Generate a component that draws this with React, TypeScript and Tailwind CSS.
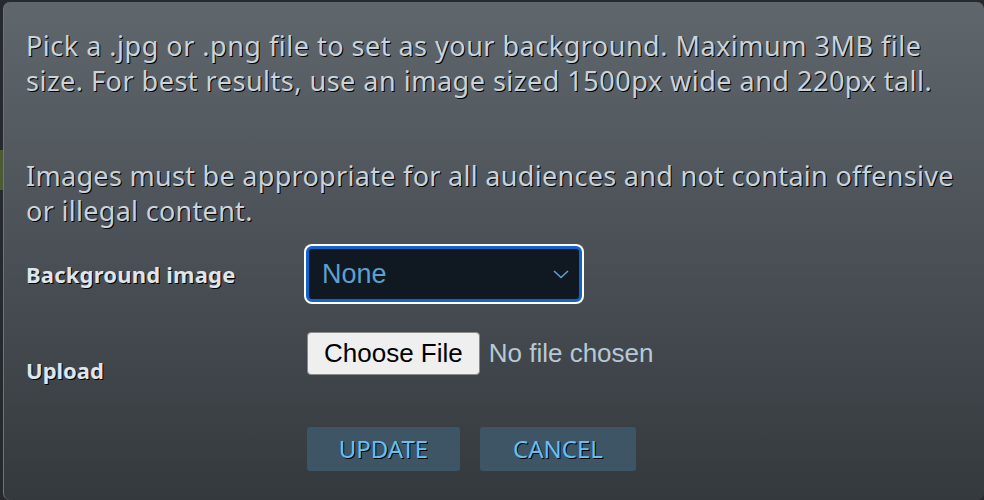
import React from "react";

export default function App() {
  const shadow = "[text-shadow:1px_1px_0_#000]";
  return (
    <div className="w-[984px] h-[500px] bg-[#26292d] relative overflow-hidden">
      <div className="absolute left-0 top-[150px] w-[3px] h-[40px] bg-[#4d5b35]" />
      <div
        className="absolute left-[3px] top-[2px] right-0 bottom-0 rounded-[7px] border-l border-[#6e767c] bg-[linear-gradient(to_bottom,#60676c_0%,#4a5055_50%,#33393d_100%)] pl-[22px] pr-[8px] pt-[26px] text-[#c9d3dc]"
        style={{ fontFamily: '"Noto Sans", "Open Sans", sans-serif' }}
      >
        <p className={`text-[27px] leading-[35px] tracking-[0.5px] ${shadow}`}>
          <span className="block whitespace-nowrap">Pick a .jpg or .png file to set as your background. Maximum 3MB file</span>
          <span className="block whitespace-nowrap">size. For best results, use an image sized 1500px wide and 220px tall.</span>
        </p>
        <p className={`text-[27px] leading-[35px] tracking-[0.3px] mt-[60px] ${shadow}`}>
          <span className="block whitespace-nowrap">Images must be appropriate for all audiences and not contain offensive</span>
          <span className="block whitespace-nowrap">or illegal content.</span>
        </p>

        <div className="flex items-center mt-[16px]">
          <div className={`w-[278px] text-[22px] leading-[30px] font-bold tracking-[0.2px] text-[#dfe5ea] ${shadow}`}>Background image</div>
          <div className="w-[280px] h-[60px] rounded-[8px] bg-white p-[2px]">
            <div className="w-full h-full rounded-[6px] border-[3px] border-[#1363cc] bg-[#101822] flex items-center justify-between pl-[13px] pr-[9px]">
              <span className="text-[27px] text-[#5ea0cf]" style={{ fontFamily: '"Liberation Sans", Arial, sans-serif' }}>None</span>
              <svg width="18" height="12" viewBox="0 0 18 12" fill="none">
                <path d="M2 3 L9 9.5 L16 3" stroke="#5ea0cf" strokeWidth="1.6" />
              </svg>
            </div>
          </div>
        </div>

        <div className="flex items-start mt-[28px]">
          <div className={`w-[281px] pt-[23px] text-[22px] leading-[30px] font-bold text-[#dfe5ea] ${shadow}`}>Upload</div>
          <div className="flex items-center" style={{ fontFamily: '"Liberation Sans", Arial, sans-serif' }}>
            <div className="h-[43px] px-[16px] rounded-[4px] border border-[#8a8a8a] bg-[#efefef] text-black text-[26px] flex items-center">
              Choose File
            </div>
            <span className="ml-[9px] text-[26px] text-[#b8c8d6]">No file chosen</span>
          </div>
        </div>

        <div className="flex gap-[20px] ml-[281px] mt-[42px]">
          <div className={`w-[153px] h-[44px] rounded-[3px] bg-[#3e5566] text-[#66c0f4] text-[24px] flex items-center justify-center ${shadow}`}>
            UPDATE
          </div>
          <div className={`w-[156px] h-[44px] rounded-[3px] bg-[#3e5566] text-[#66c0f4] text-[24px] flex items-center justify-center ${shadow}`}>
            CANCEL
          </div>
        </div>
      </div>
    </div>
  );
}
